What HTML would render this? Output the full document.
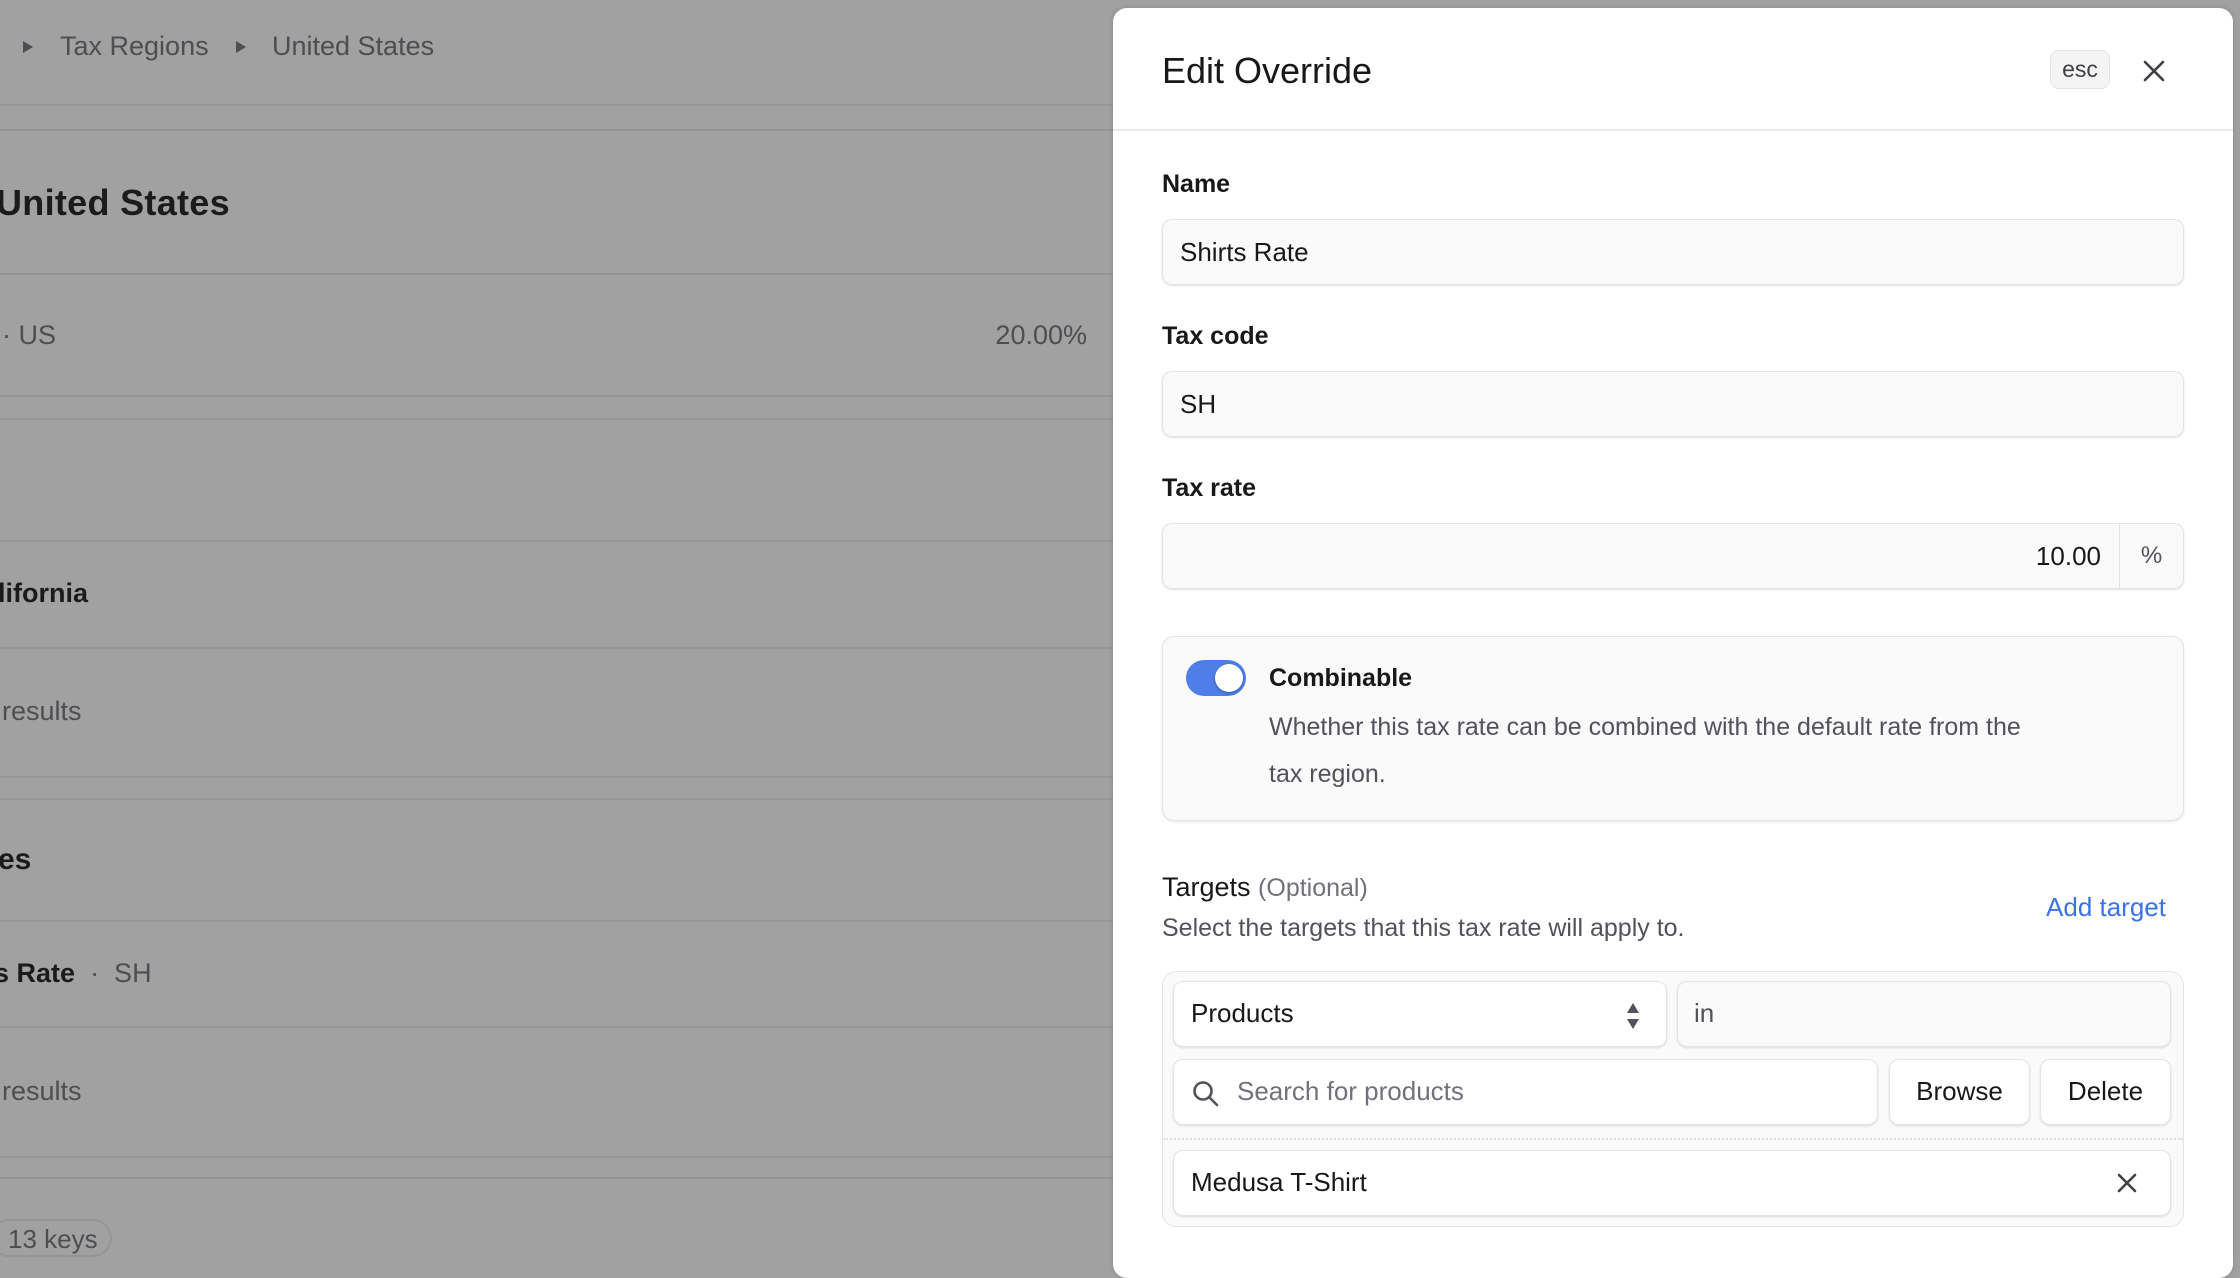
<!DOCTYPE html>
<html><head><meta charset="utf-8"><style>
*{box-sizing:border-box;margin:0;padding:0}
body{width:2240px;height:1260px;overflow:hidden;background:#a1a1a1;font-family:"Liberation Sans",sans-serif;position:relative}
.a{position:absolute;white-space:nowrap}
.hl{position:absolute;left:0;width:1120px;height:2px;background:#959595}
.bg{color:#4e4e52;font-size:27px}
.dk{color:#1b1b1c;font-size:27px;font-weight:bold}
.panel{position:absolute;left:1113px;top:8px;width:1120px;height:1270px;background:#fff;border-radius:14px;box-shadow:0 0 6px rgba(0,0,0,.15)}
.lbl{position:absolute;left:49px;font-size:25px;color:#18181b;font-weight:bold}
.inp{position:absolute;left:49px;width:1022px;height:66px;background:#fafafa;border:1px solid #e4e4e7;border-radius:10px;box-shadow:0 1px 2px rgba(0,0,0,.12);font-size:26px;color:#18181b;line-height:64px;padding-left:17px}
.w{position:absolute;background:#fff;border:1px solid #e4e4e7;border-radius:10px;box-shadow:0 1px 2px rgba(0,0,0,.12);font-size:26px;color:#18181b;line-height:62px}
</style></head><body>
<svg class="a" style="left:22px;top:40px" width="12" height="14"><path d="M1 1L11 7L1 13Z" fill="#4e4e52"/></svg>
<div class="a bg" style="left:60px;top:31px">Tax Regions</div>
<svg class="a" style="left:235px;top:40px" width="12" height="14"><path d="M1 1L11 7L1 13Z" fill="#4e4e52"/></svg>
<div class="a bg" style="left:272px;top:31px">United States</div>
<div class="hl" style="top:104px"></div><div class="hl" style="top:129px"></div>
<div class="a" style="left:-4px;top:182px;font-size:36px;color:#1b1b1c;font-weight:bold;letter-spacing:0.3px">United States</div>
<div class="hl" style="top:273px"></div>
<div class="a bg" style="left:2px;top:320px">· US</div>
<div class="a bg" style="right:1153px;top:320px">20.00%</div>
<div class="hl" style="top:395px"></div><div class="hl" style="top:418px"></div>
<div class="hl" style="top:540px"></div>
<div class="a dk" style="left:-2px;top:578px">lifornia</div>
<div class="hl" style="top:647px"></div>
<div class="a bg" style="left:2px;top:696px">results</div>
<div class="hl" style="top:776px"></div><div class="hl" style="top:798px"></div>
<div class="a dk" style="left:-2px;top:843px;font-size:30px">es</div>
<div class="hl" style="top:920px"></div>
<div class="a" style="left:-6px;top:958px;font-size:27px"><b style="color:#1b1b1c">s Rate</b> <span style="color:#4e4e52">&nbsp;·&nbsp; SH</span></div>
<div class="hl" style="top:1026px"></div>
<div class="a bg" style="left:2px;top:1076px">results</div>
<div class="hl" style="top:1156px"></div><div class="hl" style="top:1177px"></div>
<div class="a bg" style="left:-10px;top:1219px;height:38px;padding:3px 12px 0 16px;border:2px solid #959595;border-radius:19px;line-height:30px;font-size:26px">13 keys</div>

<div class="panel">
<div class="a" style="left:49px;top:42px;font-size:36px;color:#18181b">Edit Override</div>
<div class="a" style="left:937px;top:42px;width:60px;height:39px;border:1px solid #e4e4e7;background:#f4f4f5;border-radius:9px;font-size:23px;color:#3f3f46;text-align:center;line-height:36px">esc</div>
<svg class="a" style="left:1030px;top:52px" width="22" height="22"><path d="M2 2L20 20M20 2L2 20" stroke="#3f3f46" stroke-width="2.6" stroke-linecap="round"/></svg>
<div class="a" style="left:0;top:121px;width:1120px;height:2px;background:#e8e8ea"></div>
<div class="lbl" style="top:162px">Name</div>
<div class="inp" style="top:211px">Shirts Rate</div>
<div class="lbl" style="top:314px">Tax code</div>
<div class="inp" style="top:363px">SH</div>
<div class="lbl" style="top:466px">Tax rate</div>
<div class="inp" style="top:515px;text-align:right;padding-right:82px">10.00<div class="a" style="right:0;top:0;width:64px;height:64px;border-left:1px solid #e4e4e7;text-align:center;color:#52525b;font-size:24px">%</div></div>
<div class="a" style="left:49px;top:628px;width:1022px;height:185px;background:#fafafa;border:1px solid #e4e4e7;border-radius:12px;box-shadow:0 1px 2px rgba(0,0,0,.1)"></div>
<div class="a" style="left:73px;top:652px;width:60px;height:36px;border-radius:18px;background:#4e7fe8"><div class="a" style="left:29px;top:4px;width:28px;height:28px;border-radius:50%;background:#fff;box-shadow:0 1px 3px rgba(0,0,0,.3)"></div></div>
<div class="a" style="left:156px;top:656px;font-size:25px;font-weight:bold;color:#18181b">Combinable</div>
<div class="a" style="left:156px;top:696px;font-size:25px;color:#52525b;line-height:47px;white-space:normal;width:760px">Whether this tax rate can be combined with the default rate from the tax region.</div>
<div class="a" style="left:49px;top:864px;font-size:27px;color:#18181b">Targets <span style="color:#71717a;font-size:25px">(Optional)</span></div>
<div class="a" style="left:49px;top:906px;font-size:25px;color:#52525b">Select the targets that this tax rate will apply to.</div>
<div class="a" style="right:67px;top:884px;font-size:26px;color:#3b72e6">Add target</div>
<div class="a" style="left:49px;top:963px;width:1022px;height:256px;background:#fafafa;border:1px solid #e4e4e7;border-radius:14px"></div>
<div class="w" style="left:60px;top:973px;width:494px;height:66px;padding-left:17px">Products
<svg class="a" style="left:451px;top:20px" width="16" height="28"><path d="M8 1L14 11H2Z M8 27L14 17H2Z" fill="#52525b"/></svg></div>
<div class="w" style="left:564px;top:973px;width:494px;height:66px;padding-left:16px;background:#fafafa;color:#52525b">in</div>
<div class="w" style="left:60px;top:1051px;width:705px;height:66px;padding-left:63px;color:#71717a">Search for products
<svg class="a" style="left:18px;top:20px" width="28" height="28"><circle cx="11" cy="11" r="8.5" fill="none" stroke="#52525b" stroke-width="2.6"/><path d="M17.5 17.5L25 25" stroke="#52525b" stroke-width="2.6" stroke-linecap="round"/></svg></div>
<div class="w" style="left:776px;top:1051px;width:141px;height:66px;text-align:center">Browse</div>
<div class="w" style="left:927px;top:1051px;width:131px;height:66px;text-align:center">Delete</div>
<div class="a" style="left:50px;top:1130px;width:1020px;border-top:2px dotted #e0e0e3"></div>
<div class="w" style="left:60px;top:1142px;width:998px;height:66px;padding-left:17px">Medusa T-Shirt
<svg class="a" style="left:943px;top:22px" width="20" height="20"><path d="M2 2L18 18M18 2L2 18" stroke="#3f3f46" stroke-width="2.6" stroke-linecap="round"/></svg></div>
</div>
</body></html>
